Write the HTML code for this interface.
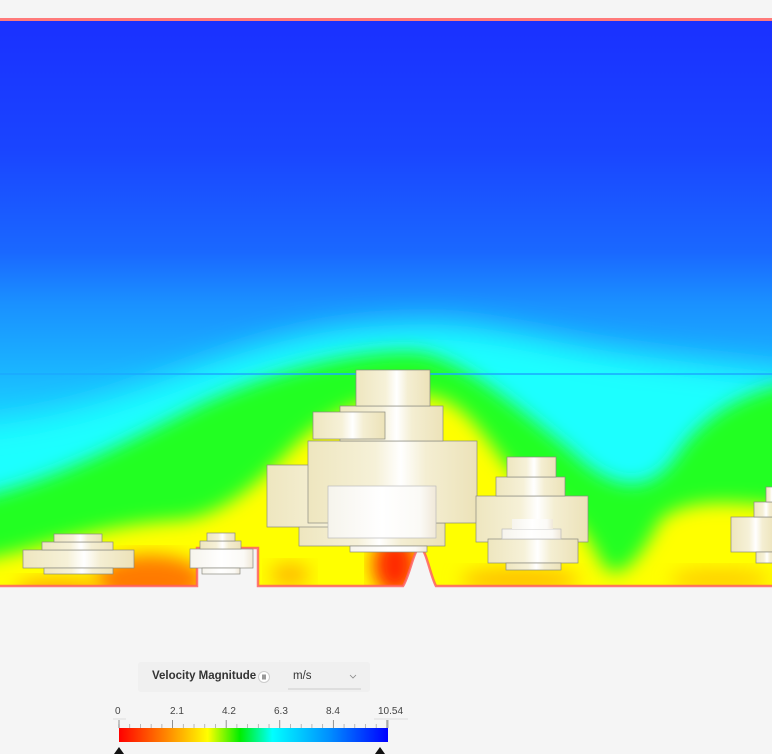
<!DOCTYPE html>
<html><head><meta charset="utf-8"><style>
html,body{margin:0;padding:0;background:#f5f5f5;width:772px;height:754px;overflow:hidden;font-family:"Liberation Sans",sans-serif}
svg{position:absolute;left:0;top:0}
.lbl{position:absolute;font-size:10px;color:#444}
</style></head><body>
<svg width="772" height="754" viewBox="0 0 772 754">
<defs>
<linearGradient id="sky" x1="0" y1="0" x2="0" y2="1">
<stop offset="0" stop-color="#1a30ff"/>
<stop offset="0.23" stop-color="#1a45ff"/>
<stop offset="0.41" stop-color="#1a68ff"/>
<stop offset="0.5" stop-color="#1a90ff"/>
<stop offset="0.58" stop-color="#1aa8ff"/>
<stop offset="0.72" stop-color="#1ad4ff"/>
<stop offset="0.85" stop-color="#1affff"/>
<stop offset="1" stop-color="#1affff"/>
</linearGradient>
<filter id="b1" x="-20%" y="-20%" width="140%" height="140%"><feGaussianBlur stdDeviation="16"/></filter>
<filter id="b2" x="-20%" y="-20%" width="140%" height="140%"><feGaussianBlur stdDeviation="9"/></filter>
<linearGradient id="bld" x1="0" y1="0" x2="1" y2="0">
<stop offset="0" stop-color="#eee6bf"/>
<stop offset="0.4" stop-color="#f6f1d8"/>
<stop offset="0.55" stop-color="#ffffff"/>
<stop offset="0.7" stop-color="#f4eed2"/>
<stop offset="1" stop-color="#ece2b8"/>
</linearGradient>
<linearGradient id="bw" x1="0" y1="0" x2="1" y2="0">
<stop offset="0" stop-color="#f6f4ec"/>
<stop offset="0.5" stop-color="#ffffff"/>
<stop offset="0.85" stop-color="#fbfaf6"/>
<stop offset="1" stop-color="#f0e8d8"/>
</linearGradient>
<linearGradient id="bar" x1="0" y1="0" x2="1" y2="0">
<stop offset="0" stop-color="#ff0000"/>
<stop offset="0.2" stop-color="#ff9900"/>
<stop offset="0.33" stop-color="#ffff00"/>
<stop offset="0.45" stop-color="#00ee00"/>
<stop offset="0.57" stop-color="#00ffff"/>
<stop offset="0.78" stop-color="#0090ff"/>
<stop offset="1" stop-color="#0000ff"/>
</linearGradient>
<clipPath id="dom"><rect x="0" y="20" width="772" height="566"/></clipPath>
</defs>
<rect x="0" y="0" width="772" height="754" fill="#f5f5f5"/>
<g clip-path="url(#dom)">
<rect x="0" y="20" width="772" height="566" fill="url(#sky)"/>
<path d="M-60,430 L-60,600 L840,600 L840,380 C760,370 700,365 600,350 C520,335 460,320 400,325 C320,327 260,345 180,375 C100,405 40,425 -60,430 Z" fill="#1affff" filter="url(#b1)"/>
<path d="M-60,505 C40,490 120,445 200,405 C280,368 360,350 415,352 C460,356 520,410 570,450 C610,490 650,500 680,450 C710,410 750,385 840,375 L840,620 L-60,620 Z" fill="#22ff22" filter="url(#b2)"/>
<path d="M-60,565 C20,560 80,525 180,520 C230,515 270,470 300,440 C340,405 380,395 420,395 C460,395 480,430 510,470 C540,495 570,500 600,560 C615,590 640,560 660,520 C690,495 740,500 840,515 L840,620 L-60,620 Z" fill="#ffff00" filter="url(#b2)"/>
<ellipse cx="150" cy="580" rx="55" ry="25" fill="#ff7a00" filter="url(#b2)"/>
<ellipse cx="60" cy="590" rx="45" ry="12" fill="#ffb000" filter="url(#b2)"/>
<ellipse cx="395" cy="565" rx="22" ry="30" fill="#ff2a00" filter="url(#b2)"/>
<ellipse cx="290" cy="575" rx="20" ry="12" fill="#ffbb00" filter="url(#b2)"/>
<ellipse cx="520" cy="580" rx="60" ry="12" fill="#ffc000" filter="url(#b2)"/>
<ellipse cx="720" cy="580" rx="50" ry="12" fill="#ffd000" filter="url(#b2)"/>
</g>
<line x1="0" y1="374" x2="772" y2="374" stroke="#1aa8ff" stroke-width="1.5"/>
<path d="M0,586 L197,586 L197,548 L258,548 L258,586 L403,586 C410,575 414,548 420,548 C426,548 430,575 436,586 L772,586 L772,600 L0,600 Z" fill="#f5f5f5"/>
<path d="M0,586 L197,586 L197,548 L258,548 L258,586 L403,586 C410,575 414,548 420,548 C426,548 430,575 436,586 L772,586" fill="none" stroke="#ff6060" stroke-width="2.5" opacity="0.85"/>
<rect x="0" y="18" width="772" height="3" fill="#ff7a7a"/>
<g stroke="#8a8a80" stroke-width="0.7">
<rect x="299" y="523" width="146" height="23" fill="url(#bld)"/>
<rect x="350" y="546" width="77" height="6" fill="url(#bw)"/>
<rect x="267" y="465" width="163" height="62" fill="url(#bld)"/>
<rect x="308" y="441" width="169" height="82" fill="url(#bld)"/>
<rect x="328" y="486" width="108" height="52" fill="url(#bw)" stroke="#bbb"/>
<rect x="340" y="406" width="103" height="35" fill="url(#bld)"/>
<rect x="313" y="412" width="72" height="27" fill="url(#bld)"/>
<rect x="356" y="370" width="74" height="36" fill="url(#bld)"/>
<rect x="476" y="496" width="112" height="46" fill="url(#bld)"/>
<rect x="496" y="477" width="69" height="19" fill="url(#bld)"/>
<rect x="507" y="457" width="49" height="20" fill="url(#bld)"/>
<rect x="488" y="539" width="90" height="24" fill="url(#bld)"/>
<rect x="502" y="529" width="59" height="10" fill="url(#bw)" stroke="#bbb"/>
<rect x="512" y="519" width="41" height="10" fill="url(#bw)" stroke="none"/>
<rect x="506" y="563" width="55" height="7" fill="url(#bld)"/>
<rect x="23" y="550" width="111" height="18" fill="url(#bld)"/>
<rect x="42" y="542" width="71" height="8" fill="url(#bld)"/>
<rect x="54" y="534" width="48" height="8" fill="url(#bld)"/>
<rect x="44" y="568" width="69" height="6" fill="url(#bld)"/>
<rect x="190" y="549" width="63" height="19" fill="url(#bw)"/>
<rect x="200" y="541" width="41" height="8" fill="url(#bld)"/>
<rect x="207" y="533" width="28" height="8" fill="url(#bld)"/>
<rect x="202" y="568" width="38" height="6" fill="url(#bw)"/>
<rect x="731" y="517" width="45" height="35" fill="url(#bld)"/>
<rect x="754" y="502" width="22" height="15" fill="url(#bld)"/>
<rect x="766" y="487" width="10" height="15" fill="url(#bld)"/>
<rect x="756" y="552" width="20" height="11" fill="url(#bld)"/>
</g>
<rect x="138" y="662" width="232" height="30" rx="3" fill="#f0f0f0"/>
<line x1="288" y1="689" x2="361" y2="689" stroke="#ccc"/>
<circle cx="264" cy="677" r="5.5" fill="#fff" stroke="#ccc"/>
<rect x="262" y="674.5" width="4" height="5" fill="#999"/>
<path d="M350,675 L353,678 L356,675" fill="none" stroke="#888" stroke-width="0.8"/>
<line x1="113" y1="719" x2="126" y2="719" stroke="#ddd"/>
<line x1="374" y1="719" x2="408" y2="719" stroke="#ddd"/>
<g stroke="#999" stroke-width="0.8">
<line x1="119" y1="724" x2="119" y2="728"/>
<line x1="388" y1="720" x2="388" y2="728"/>
</g>
<g id="ticks" stroke="#aaa" stroke-width="0.8"></g>
<rect x="119" y="728" width="269" height="14" fill="url(#bar)"/>
<path d="M114,754 L119,747 L124,754 Z" fill="#111"/>
<path d="M375,754 L380,747 L385,754 Z" fill="#111"/>
</svg>
<div style="position:absolute;left:152px;top:670px;font-size:11.5px;font-weight:bold;color:#333">Velocity Magnitude</div>
<div style="position:absolute;left:293px;top:670px;font-size:11.5px;color:#333">m/s</div>
<div class="lbl" style="left:115px;top:706px">0</div>
<div class="lbl" style="left:170px;top:706px">2.1</div>
<div class="lbl" style="left:222px;top:706px">4.2</div>
<div class="lbl" style="left:274px;top:706px">6.3</div>
<div class="lbl" style="left:326px;top:706px">8.4</div>
<div class="lbl" style="left:378px;top:706px">10.54</div>
<script>
var g=document.getElementById('ticks');var s='';
for(var i=0;i<=25;i++){var x=119+i*(269/25.1);var major=(i%5==0);s+='<line x1="'+x+'" y1="'+(major?720:724)+'" x2="'+x+'" y2="728" stroke="'+(major?'#777':'#aaa')+'"/>';}
g.innerHTML=s;
</script>
</body></html>
